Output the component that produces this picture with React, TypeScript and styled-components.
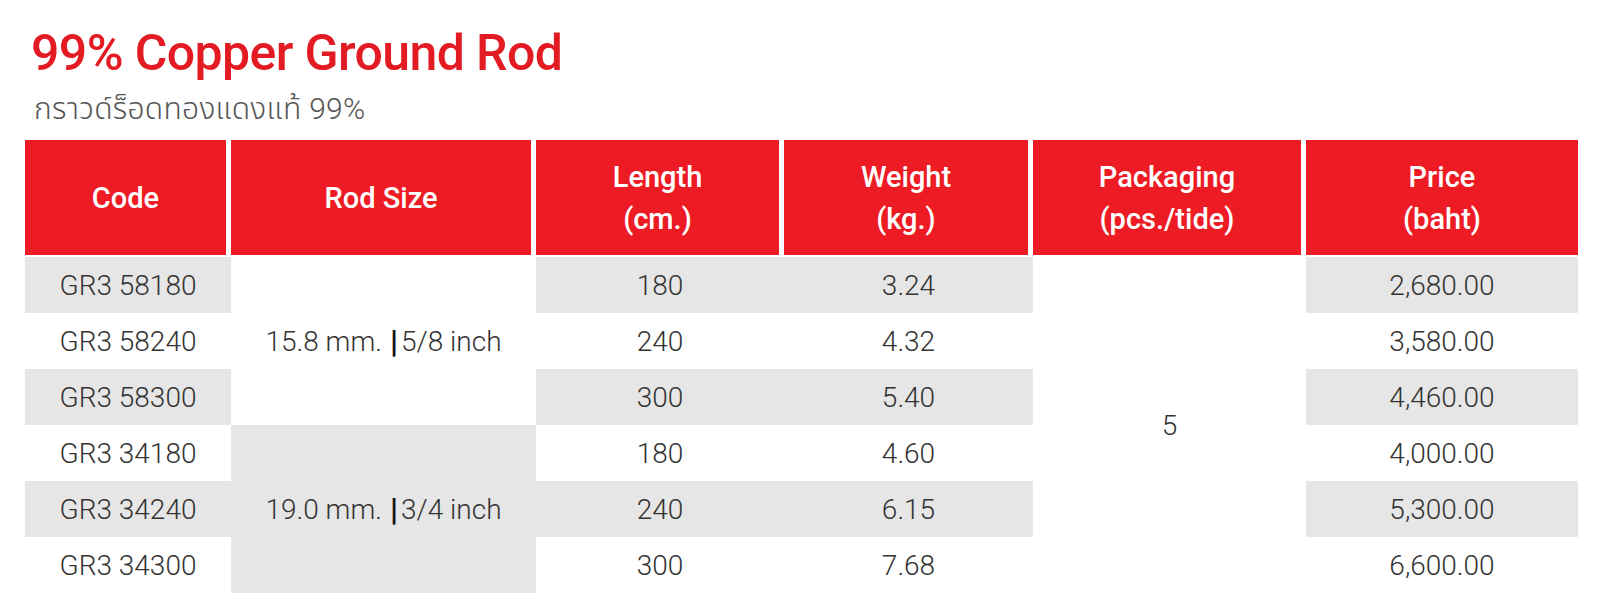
import React from "react";
import styled, { createGlobalStyle } from "styled-components";

const GlobalStyle = createGlobalStyle`
  html, body { margin: 0; padding: 0; background: #ffffff; }
  body { font-family: "Roboto", "Noto Sans", "DejaVu Sans", sans-serif; }
`;

const Page = styled.div`
  padding: 28px 22px 0 25px;
  width: 1600px;
  box-sizing: border-box;
`;

const Title = styled.h1`
  margin: 0 0 0 6px;
  font-family: "Roboto", sans-serif;
  font-weight: 500;
  font-size: 50px;
  line-height: 50px;
  letter-spacing: -0.6px;
  color: #e31b23;
`;

const Subtitle = styled.div`
  margin: 16px 0 0 9px;
  font-family: "Roboto", "Noto Sans Thai", "Noto Sans", sans-serif;
  font-weight: 300;
  font-size: 30px;
  line-height: 30px;
  letter-spacing: 0.3px;
  color: #555555;
`;

const Table = styled.div`
  margin-top: 16px;
  display: grid;
  grid-template-columns: 206px 305px 248px 249px 273px 272px;
  grid-template-rows: 117px repeat(6, 56px);
`;

const HeadCell = styled.div<{ $last?: boolean }>`
  background: #ed1c24;
  color: #ffffff;
  font-weight: 500;
  font-size: 29px;
  line-height: 42px;
  display: flex;
  flex-direction: column;
  align-items: center;
  justify-content: center;
  text-align: center;
  border-right: ${(p) => (p.$last ? "0" : "5px solid #ffffff")};
  border-bottom: 2px solid #ffffff;
`;

const Cell = styled.div<{ $shade?: boolean; $span?: number }>`
  background: ${(p) => (p.$shade ? "#e6e6e6" : "#ffffff")};
  color: #333333;
  font-weight: 300;
  font-size: 28px;
  display: flex;
  align-items: center;
  justify-content: center;
  grid-row: ${(p) => (p.$span ? `span ${p.$span}` : "auto")};
`;

const Bar = styled.span`
  font-weight: 700;
  color: #111111;
  margin: 0 3px 0 8px;
  font-size: 32px;
`;

type Row = { code: string; length: string; weight: string; price: string };

const rows: Row[] = [
  { code: "GR3 58180", length: "180", weight: "3.24", price: "2,680.00" },
  { code: "GR3 58240", length: "240", weight: "4.32", price: "3,580.00" },
  { code: "GR3 58300", length: "300", weight: "5.40", price: "4,460.00" },
  { code: "GR3 34180", length: "180", weight: "4.60", price: "4,000.00" },
  { code: "GR3 34240", length: "240", weight: "6.15", price: "5,300.00" },
  { code: "GR3 34300", length: "300", weight: "7.68", price: "6,600.00" },
];

const RodSize = ({ mm, inch }: { mm: string; inch: string }) => (
  <>
    {mm}
    <Bar>|</Bar>
    {inch}
  </>
);

export default function App() {
  return (
    <>
      <GlobalStyle />
      <Page>
        <Title>99% Copper Ground Rod</Title>
        <Subtitle>กราวด์ร็อดทองแดงแท้ 99%</Subtitle>
        <Table>
          <HeadCell>Code</HeadCell>
          <HeadCell>Rod Size</HeadCell>
          <HeadCell>
            <span>Length</span>
            <span>(cm.)</span>
          </HeadCell>
          <HeadCell>
            <span>Weight</span>
            <span>(kg.)</span>
          </HeadCell>
          <HeadCell>
            <span>Packaging</span>
            <span>(pcs./tide)</span>
          </HeadCell>
          <HeadCell $last>
            <span>Price</span>
            <span>(baht)</span>
          </HeadCell>
          {rows.map((r, i) => {
            const shade = i % 2 === 0;
            return (
              <React.Fragment key={r.code}>
                <Cell $shade={shade}>{r.code}</Cell>
                {i === 0 && (
                  <Cell $span={3}>
                    <RodSize mm="15.8 mm." inch="5/8 inch" />
                  </Cell>
                )}
                {i === 3 && (
                  <Cell $span={3} $shade>
                    <RodSize mm="19.0 mm." inch="3/4 inch" />
                  </Cell>
                )}
                <Cell $shade={shade}>{r.length}</Cell>
                <Cell $shade={shade}>{r.weight}</Cell>
                {i === 0 && <Cell $span={6}>5</Cell>}
                <Cell $shade={shade}>{r.price}</Cell>
              </React.Fragment>
            );
          })}
        </Table>
      </Page>
    </>
  );
}
